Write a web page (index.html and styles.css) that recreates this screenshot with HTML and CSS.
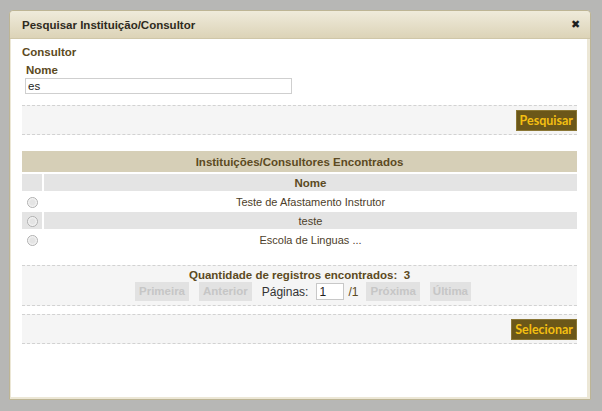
FILE: index.html
```html
<!DOCTYPE html>
<html lang="pt">
<head>
<meta charset="utf-8">
<title>Pesquisar Instituição/Consultor</title>
<link rel="stylesheet" href="styles.css">
</head>
<body>
<div class="backdrop">
  <div class="dialog">
    <div class="titlebar">
      <span class="title">Pesquisar Instituição/Consultor</span>
      <span class="close">✖</span>
    </div>
    <div class="content">
      <div class="section-label">Consultor</div>
      <div class="field-label">Nome</div>
      <input class="text-input" type="text" value="es">
      <div class="panel panel-actions panel-search">
        <button class="btn">Pesquisar</button>
      </div>
      <table class="results">
        <tr><th class="caption" colspan="2">Instituições/Consultores Encontrados</th></tr>
        <tr class="colhead"><th class="sel"></th><th>Nome</th></tr>
        <tr><td class="sel"><span class="radio"></span></td><td>Teste de Afastamento Instrutor</td></tr>
        <tr class="alt"><td class="sel"><span class="radio"></span></td><td>teste</td></tr>
        <tr><td class="sel"><span class="radio"></span></td><td>Escola de Linguas ...</td></tr>
      </table>
      <div class="panel panel-pager">
        <div class="count">Quantidade de registros encontrados:&nbsp;&nbsp;3</div>
        <div class="pager">
          <span class="pbtn">Primeira</span>
          <span class="pbtn">Anterior</span>
          <span class="plabel">Páginas:</span>
          <input class="page-input" type="text" value="1">
          <span class="ptotal">/1</span>
          <span class="pbtn">Próxima</span>
          <span class="pbtn pbtn-last">Última</span>
        </div>
      </div>
      <div class="panel panel-actions panel-select">
        <button class="btn">Selecionar</button>
      </div>
    </div>
  </div>
</div>
</body>
</html>
```

FILE: styles.css
```css
html, body {
  margin: 0;
  padding: 0;
}
body {
  width: 602px;
  height: 411px;
  background: #b7b7b5;
  font-family: "Liberation Sans", Arial, sans-serif;
  font-size: 12px;
  overflow: hidden;
}
.backdrop {
  padding: 10px 0 0 9px;
}
.dialog {
  width: 580px;
  height: 388px;
  border: 1px solid #bdb595;
  border-radius: 4px 4px 0 0;
  background: #ece7d6;
  display: flex;
  flex-direction: column;
}
.titlebar {
  height: 27px;
  flex: none;
  display: flex;
  align-items: center;
  justify-content: space-between;
  padding: 0 10px 0 12px;
  background: linear-gradient(#efebdb, #dcd3b7);
  border-bottom: 1px solid #cfc6a8;
  border-radius: 4px 4px 0 0;
}
.title {
  font-weight: bold;
  font-size: 11.5px;
  color: #2e2a20;
}
.close {
  font-size: 11px;
  color: #1e1e1e;
}
.content {
  flex: 1;
  background: #ffffff;
  margin: 0 3px 2px 1px;
  padding: 6px 10px 0 11px;
}
.section-label {
  font-weight: bold;
  font-size: 11.5px;
  color: #5c4a22;
  line-height: 14px;
}
.field-label {
  font-weight: bold;
  font-size: 11.5px;
  color: #5c4a22;
  line-height: 14px;
  margin: 4px 0 1px 4px;
}
.text-input {
  display: block;
  box-sizing: border-box;
  width: 267px;
  height: 16px;
  margin-left: 3px;
  padding: 0 2px;
  border: 1px solid #cfcfcf;
  font-family: "Liberation Sans", Arial, sans-serif;
  font-size: 11.5px;
  color: #222;
  background: #fff;
}
.panel {
  background: #f5f5f5;
  border-top: 1px dashed #d2d2d2;
  border-bottom: 1px dashed #d2d2d2;
}
.panel-actions {
  height: 28px;
  display: flex;
  align-items: center;
  justify-content: flex-end;
  padding-right: 0;
}
.panel-search {
  margin-top: 11px;
}
.panel-select {
  margin-top: 8px;
}
.btn {
  height: 21px;
  padding: 0 3px;
  background: #6b5719;
  border: 1px solid #8a7634;
  color: #f4bf12;
  font-family: Lato, "Liberation Sans", sans-serif;
  font-weight: bold;
  font-size: 12.5px;
  line-height: 17px;
}
.results {
  width: 100%;
  margin: 14px 0 15px;
  border-spacing: 0 2px;
  border-collapse: separate;
}
.results th, .results td {
  padding: 0;
  text-align: center;
  color: #5c4a22;
}
.results th {
  font-size: 11.5px;
}
.results th.caption {
  height: 21px;
  background: #d6cfb7;
}
.results .colhead th {
  height: 17px;
  background: #e4e4e4;
}
.results .colhead th.sel {
  border-right: 2px solid #fff;
}
.results td {
  height: 17px;
  font-size: 11px;
  color: #4d402a;
}
.results .sel {
  width: 15px;
  text-align: left;
  padding-left: 5px;
}
.results tr.alt td {
  background: #e4e4e4;
}
.results tr.alt td.sel {
  border-right: 2px solid #fff;
}
.radio {
  display: inline-block;
  width: 9px;
  height: 9px;
  border: 1px solid #b0b0b0;
  border-radius: 50%;
  background: radial-gradient(circle at 50% 50%, #e4e4e4 40%, #f8f8f8 70%);
  vertical-align: middle;
}
.panel-pager {
  height: 39px;
  text-align: center;
}
.count {
  font-weight: bold;
  font-size: 11.5px;
  color: #5c4a22;
  line-height: 14px;
  margin-top: 2px;
}
.pager {
  display: flex;
  justify-content: center;
  align-items: center;
  margin-top: 0;
  padding-left: 7px;
}
.pbtn {
  background: #e2e2e2;
  color: #c6c6c6;
  font-weight: bold;
  font-size: 11.5px;
  padding: 0 4px;
  height: 19px;
  line-height: 19px;
  margin-right: 10px;
}
.pbtn-last {
  margin-right: 0;
  padding: 0 3px;
}
.plabel {
  color: #333;
  margin-right: 8px;
}
.page-input {
  box-sizing: border-box;
  width: 28px;
  height: 17px;
  border: 1px solid #c8c8c8;
  padding: 0 2px;
  font-family: "Liberation Sans", Arial, sans-serif;
  font-size: 12px;
  color: #222;
}
.ptotal {
  color: #5c4a22;
  margin: 0 8px 0 4px;
}
```
